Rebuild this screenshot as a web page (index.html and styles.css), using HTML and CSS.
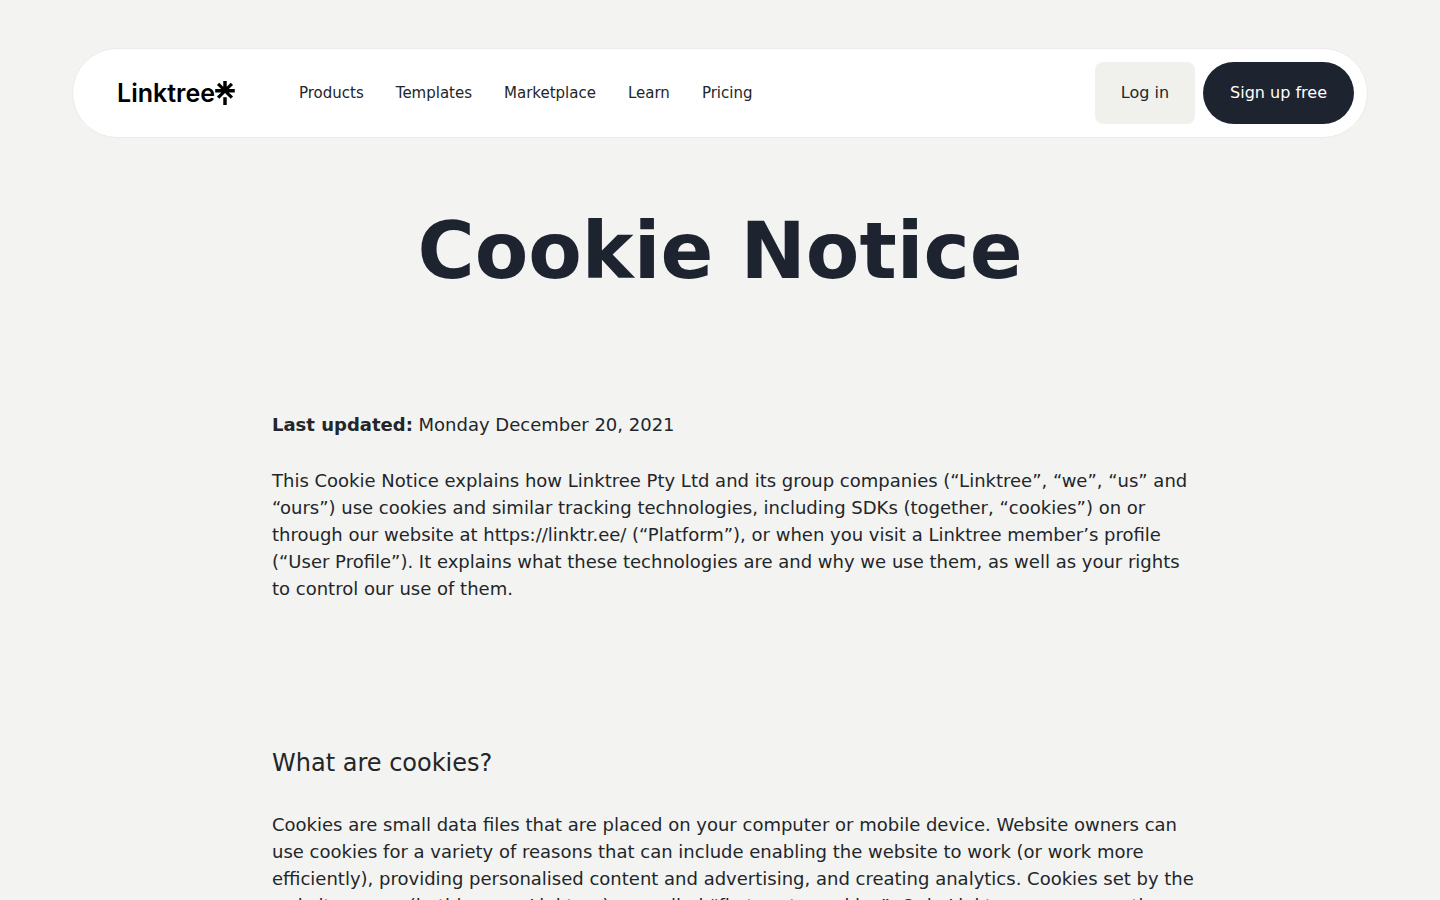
FILE: index.html
```html
<!DOCTYPE html>
<html lang="en">
<head>
<meta charset="utf-8">
<meta name="viewport" content="width=device-width, initial-scale=1">
<title>Cookie Notice</title>
<link rel="stylesheet" href="styles.css">
</head>

<body>
<header class="site-header">
  <a class="logo" href="#">
    <span>Linktree</span>
    <svg class="logo-mark" viewBox="2 0 20 24" aria-hidden="true">
      <path d="m13.736 5.853 4.005-4.117 2.325 2.381-4.201 4.005h5.909v3.305h-5.937l4.229 4.108-2.325 2.334L12 12.1l-5.742 5.77-2.325-2.325 4.229-4.108H2.225V8.123h5.908L3.933 4.118l2.324-2.381 4.005 4.117V0h3.474ZM10.262 16.2h3.474V24h-3.474Z"/>
    </svg>
  </a>
  <nav class="main-nav">
    <a href="#">Products</a>
    <a href="#">Templates</a>
    <a href="#">Marketplace</a>
    <a href="#">Learn</a>
    <a href="#">Pricing</a>
  </nav>
  <div class="actions">
    <a class="btn btn-login" href="#">Log in</a>
    <a class="btn btn-signup" href="#">Sign up free</a>
  </div>
</header>

<main>
  <h1>Cookie Notice</h1>

  <div class="content">
    <section>
      <p><strong>Last updated:</strong> Monday December 20, 2021</p>
      <p>This Cookie Notice explains how Linktree Pty Ltd and its group companies (“Linktree”, “we”, “us” and “ours”) use cookies and similar tracking technologies, including SDKs (together, “cookies”) on or through our website at https://linktr.ee/ (“Platform”), or when you visit a Linktree member’s profile (“User Profile”). It explains what these technologies are and why we use them, as well as your rights to control our use of them.</p>
    </section>

    <section>
      <h2>What are cookies?</h2>
      <p>Cookies are small data files that are placed on your computer or mobile device. Website owners can use cookies for a variety of reasons that can include enabling the website to work (or work more efficiently), providing personalised content and advertising, and creating analytics. Cookies set by the website owner (in this case, Linktree) are called “first party cookies”. Only Linktree can access the first party cookies it sets.</p>
    </section>
  </div>
</main>
</body>
</html>
```
FILE: styles.css
```css
* {
  box-sizing: border-box;
}

body {
  margin: 0;
  background-color: #f3f3f1;
  color: #222629;
  font-family: "DejaVu Sans", sans-serif;
  font-size: 18px;
  line-height: 27px;
}

a {
  color: inherit;
  text-decoration: none;
}

.site-header {
  display: flex;
  align-items: center;
  margin: 48px 5% 0;
  padding: 13px 13px 13px 44px;
  border: 1px solid #ebebe9;
  border-radius: 45px;
  background-color: white;
}

.logo {
  display: flex;
  align-items: center;
  color: black;
  font-family: Inter, sans-serif;
  font-size: 25px;
  font-weight: 600;
}

.logo-mark {
  width: 20px;
  height: 24px;
}

.main-nav {
  display: flex;
  gap: 32px;
  margin-left: 64px;
  font-size: 15px;
}

.actions {
  display: flex;
  gap: 8px;
  margin-left: auto;
}

.btn {
  padding: 19px 26px;
  font-size: 16px;
  line-height: 24px;
}

.btn-login {
  border-radius: 8px;
  background-color: #f0f0ed;
}

.btn-signup {
  padding: 19px 27px;
  border-radius: 31px;
  background-color: #1e2330;
  color: white;
}

h1 {
  margin: 65px 24px 0;
  color: #1e2330;
  font-size: 78px;
  line-height: 96px;
  text-align: center;
}

.content {
  max-width: 992px;
  margin: 0 auto;
  padding: 112px 16px 64px 48px;
}

section {
  margin-bottom: 145px;
}

h2 {
  margin: 0 0 32px;
  font-size: 24px;
  font-weight: normal;
  line-height: 32px;
}

p {
  margin: 0 0 29px;
}
```
